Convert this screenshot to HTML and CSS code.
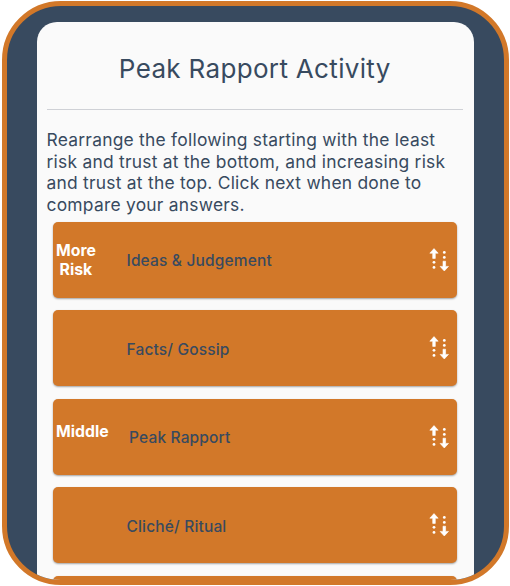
FILE: index.html
```html
<!DOCTYPE html>
<html lang="en">
<head>
<meta charset="utf-8">
<title>Peak Rapport Activity</title>
<link rel="stylesheet" href="styles.css">
</head>
<body>
<svg class="defs" width="0" height="0" aria-hidden="true">
  <symbol id="swap" viewBox="0 0 20 24">
    <path d="M5 .6 9.2 5.2H6.3V10.4H3.7V5.2H.8Z" stroke="currentColor" stroke-width=".6" stroke-linejoin="round"/>
    <circle cx="5" cy="14.3" r="1.4"/><circle cx="5" cy="19.4" r="1.4"/>
    <circle cx="15.3" cy="4.4" r="1.4"/><circle cx="15.3" cy="9.4" r="1.4"/>
    <path d="M15.3 23 11.1 18.4H14V13.2H16.6V18.4H19.5Z" stroke="currentColor" stroke-width=".6" stroke-linejoin="round"/>
  </symbol>
</svg>
<div class="frame">
  <main class="card">
    <h1 class="title">Peak Rapport Activity</h1>
    <p class="intro">Rearrange the following starting with the least<br>risk and trust at the bottom, and increasing risk<br>and trust at the top. Click next when done to<br>compare your answers.</p>
    <ul class="list">
      <li class="item"><span class="level"><span class="stack">More<br>Risk</span></span><span class="label">Ideas &amp; Judgement</span><svg class="icon"><use href="#swap"/></svg></li>
      <li class="item"><span class="level"></span><span class="label">Facts/ Gossip</span><svg class="icon"><use href="#swap"/></svg></li>
      <li class="item"><span class="level level-middle">Middle</span><span class="label">Peak Rapport</span><svg class="icon"><use href="#swap"/></svg></li>
      <li class="item"><span class="level"></span><span class="label">Cliché/ Ritual</span><svg class="icon"><use href="#swap"/></svg></li>
      <li class="item"></li>
    </ul>
  </main>
</div>
</body>
</html>
```

FILE: styles.css
```css
* { box-sizing: border-box; }
body {
  margin: 0;
  padding: 1px 1.5px;
  height: 586px;
  overflow: hidden;
  background: #fff;
  color: #384a5f;
  font-family: Inter, "Liberation Sans", sans-serif;
}
.defs { display: block; height: 0; }
.frame {
  width: 507px;
  height: 584px;
  border: 5px solid #d27829;
  border-radius: 59px;
  background: #384a5f;
  overflow: hidden;
}
.card {
  width: 437px;
  height: 700px;
  margin: 16px 0 0 30px;
  padding: 0 10.5px 0 10px;
  border-radius: 20px;
  background: #fafafa;
}
.title {
  margin: 0;
  height: 88px;
  padding-top: 31px;
  border-bottom: 1px solid #cfd1d6;
  font-size: 26px;
  line-height: 32px;
  font-weight: 400;
  letter-spacing: 0.33px;
  text-align: center;
}
.intro {
  margin: 19px 0 0;
  font-size: 17.4px;
  line-height: 21.6px;
  letter-spacing: 0.25px;
  white-space: nowrap;
}
.list {
  margin: 6.6px 0 0;
  padding: 0 6px 0 6.5px;
  list-style: none;
}
.item {
  display: flex;
  align-items: center;
  height: 76px;
  margin-bottom: 12.5px;
  padding: 0 8px 0 3px;
  border-radius: 5px;
  background: #d27829;
  box-shadow: 0 1px 2px rgba(0, 0, 0, 0.35);
}
.level {
  width: 70.5px;
  color: #fff;
  font-size: 15.8px;
  line-height: 19px;
  font-weight: 700;
}
.stack { display: inline-block; text-align: center; }
.level-middle { width: 73px; padding-bottom: 11px; }
.label {
  flex: 1;
  padding-top: 2.4px;
  font-size: 15.5px;
  line-height: 20px;
  font-weight: 500;
  letter-spacing: 0.16px;
}
.icon { width: 20px; height: 24px; fill: currentColor; color: #fff; }
```
